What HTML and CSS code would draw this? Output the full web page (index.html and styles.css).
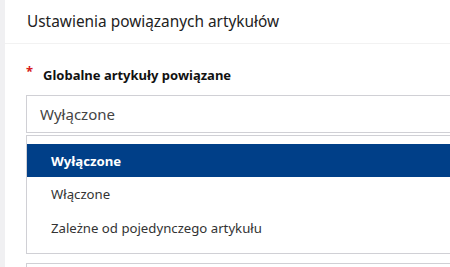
FILE: index.html
```html
<!DOCTYPE html>
<html lang="pl">

<head>
    <meta charset="UTF-8">
    <meta name="viewport" content="width=device-width, initial-scale=1.0">
    <title>Ustawienia</title>
    <link rel="stylesheet" href="styles.css">
</head>

<body>
    <div class="page">
        <div class="side-strip"></div>
        <div class="panel">
            <div class="panel-head">
                <h2 class="panel-title">Ustawienia powiązanych artykułów</h2>
            </div>
            <div class="panel-body">
                <div class="field">
                    <label class="field-label"><span class="required">*</span>Globalne artykuły powiązane</label>
                    <div class="select-box">Wyłączone</div>
                    <ul class="select-options">
                        <li class="select-option selected">Wyłączone</li>
                        <li class="select-option">Włączone</li>
                        <li class="select-option">Zależne od pojedynczego artykułu</li>
                    </ul>
                    <div class="next-box"></div>
                </div>
            </div>
        </div>
    </div>
</body>

</html>
```

FILE: styles.css
```css
body {
    margin: 0;
    font-family: "Noto Sans", "Open Sans", sans-serif;
    color: #333333;
    background-color: white;
}

h2,
p {
    margin: 0;
}

ul {
    list-style: none;
    margin: 0;
    padding: 0;
}

.page {
    display: flex;
    height: 267px;
    overflow: hidden;
}

.side-strip {
    width: 5px;
    flex-shrink: 0;
    background-color: #f0f0f2;
}

.panel {
    flex: 1;
    background-color: white;
}

.panel-head {
    height: 43px;
    display: flex;
    align-items: center;
    padding-left: 22px;
    border-bottom: 1px solid #f2f2f2;
}

.panel-title {
    font-size: 15.4px;
    font-weight: 400;
    color: #222222;
}

.panel-body {
    padding: 21px 0 0 21px;
}

.field-label {
    display: flex;
    align-items: center;
    font-size: 13px;
    font-weight: 700;
    color: #111111;
    height: 20px;
}

.required {
    color: #d71920;
    width: 17px;
    font-size: 13px;
    margin-top: -8px;
}

.select-box {
    margin-top: 10px;
    height: 36px;
    border: 1px solid #d0d0d5;
    border-right: none;
    display: flex;
    align-items: center;
    padding-left: 13px;
    font-size: 15px;
    color: #444444;
}

.select-options {
    margin-top: 2px;
    border: 1px solid #d0d0d5;
    border-right: none;
    padding: 8px 0 8px;
    display: flex;
    flex-direction: column;
}

.select-option {
    height: 34px;
    display: flex;
    align-items: center;
    padding-left: 24px;
    font-size: 13.2px;
    color: #333333;
}

.select-option.selected {
    height: 33px;
    background-color: #003f88;
    color: white;
    font-weight: 700;
}

.next-box {
    margin-top: 9px;
    height: 20px;
    border: 1px solid #d0d0d5;
    border-right: none;
}
```
